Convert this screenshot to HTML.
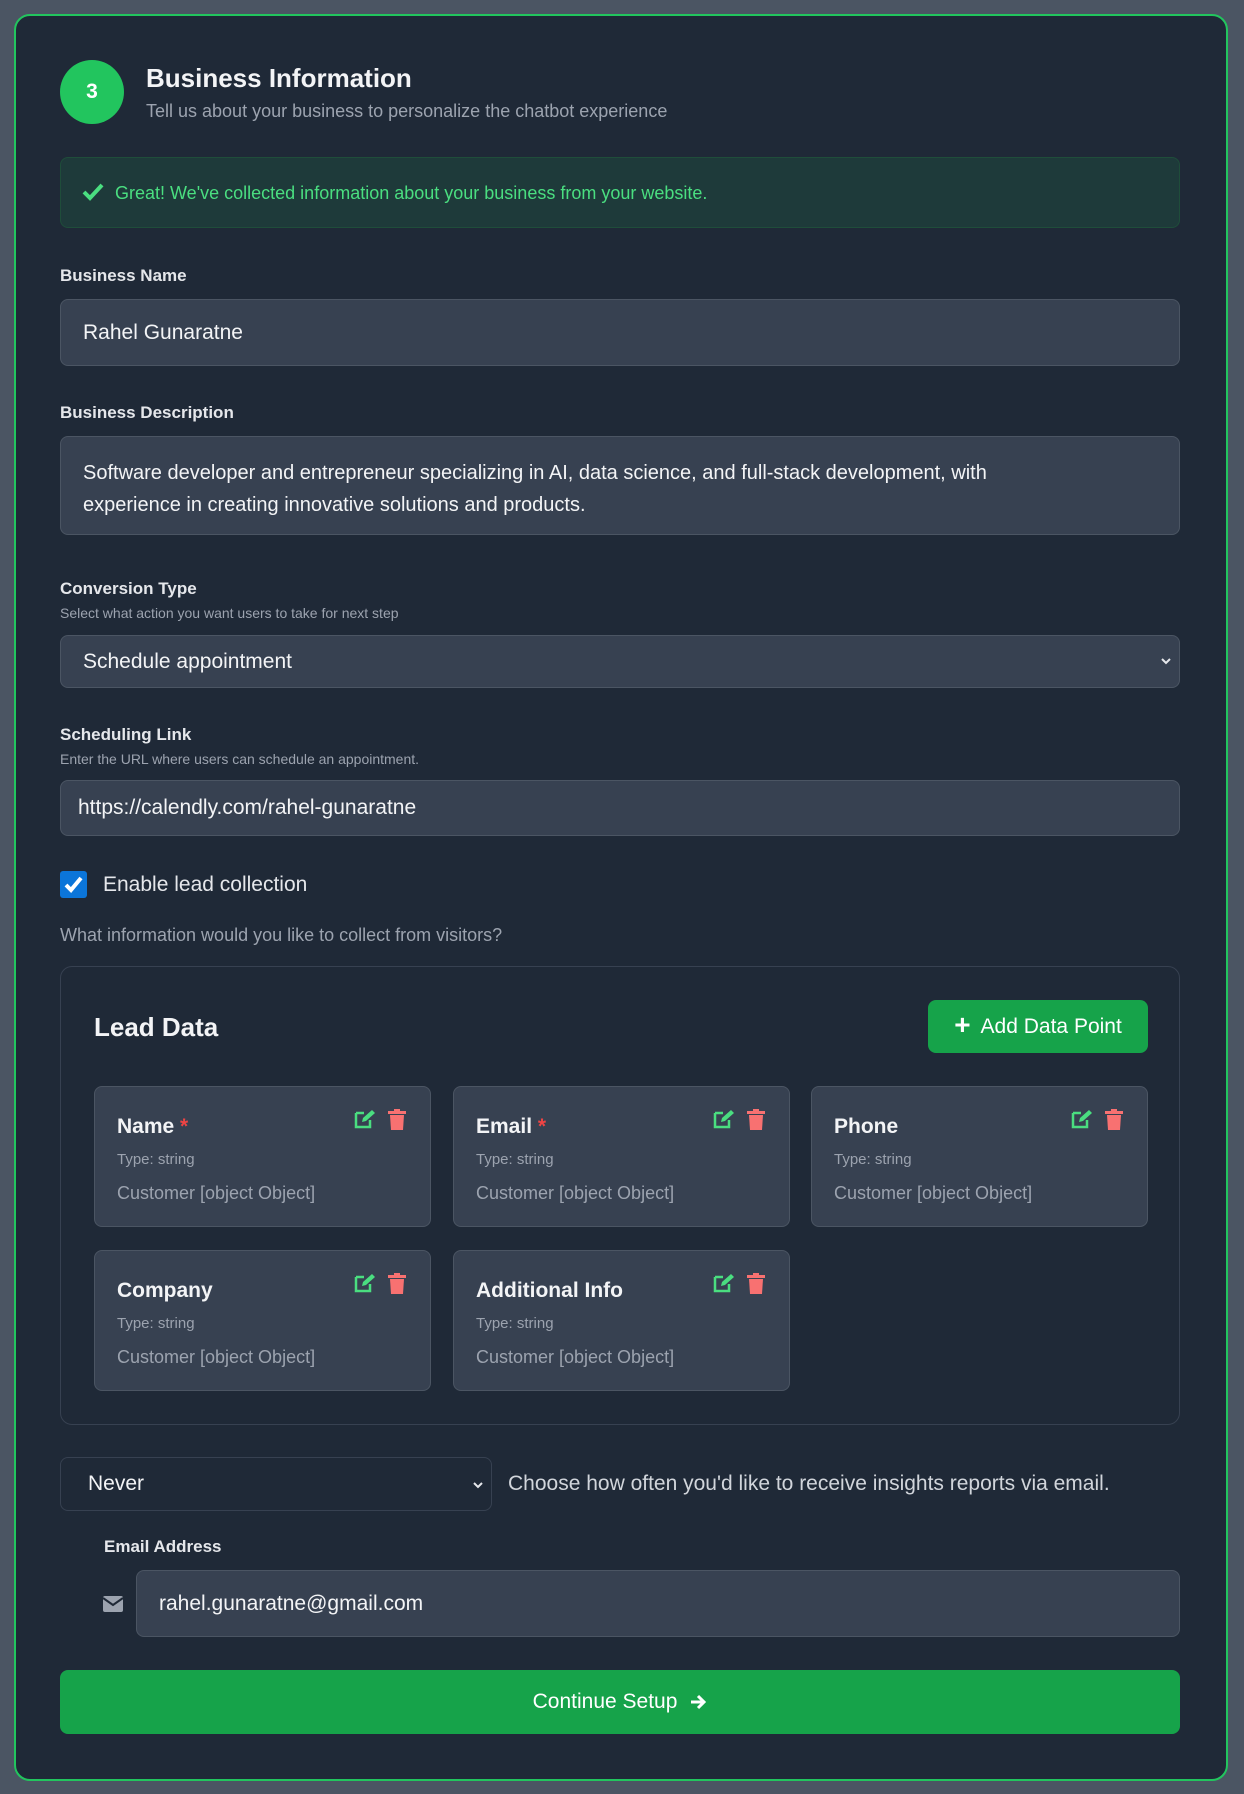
<!DOCTYPE html>
<html><head><meta charset="utf-8"><style>
*{box-sizing:border-box;margin:0;padding:0}
body{width:1244px;height:1794px;background:#4b5563;font-family:"Liberation Sans",sans-serif;position:relative;overflow:hidden;color:#f3f4f6}
.a{position:absolute}
.card{left:14px;top:14px;width:1214px;height:1767px;background:#1f2937;border:2px solid #22c55e;border-radius:16px}
.lbl{font-size:17px;font-weight:bold;color:#e5e7eb}
.sub{font-size:14px;color:#9ca3af}
.inp{background:#374151;border:1px solid #4b5563;border-radius:8px;color:#f3f4f6;font-size:21px;padding-left:22px;display:flex;align-items:center}
.lc{background:#374151;border:1px solid #4b5563;border-radius:8px;width:337px;height:141px}
.lc .t{position:absolute;left:22px;top:28px;font-size:21px;font-weight:bold;color:#f3f4f6}
.lc .t span{color:#ef4444}
.lc .ty{position:absolute;left:22px;top:64px;font-size:15px;color:#9ca3af}
.lc .d{position:absolute;left:22px;top:96px;font-size:18px;color:#9ca3af}
.lc svg{position:absolute;top:22px}
</style></head><body>
<div class="a card"></div>
<div class="a" style="left:60px;top:60px;width:64px;height:64px;border-radius:50%;background:#22c55e;color:#fff;font-weight:bold;font-size:21px;display:flex;align-items:center;justify-content:center">3</div>
<div class="a" style="left:146px;top:63px;font-size:26px;font-weight:bold;color:#f3f4f6">Business Information</div>
<div class="a" style="left:146px;top:101px;font-size:18px;color:#9ca3af">Tell us about your business to personalize the chatbot experience</div>
<div class="a" style="left:60px;top:157px;width:1120px;height:71px;background:#1e3a3a;border:1px solid #1f4d3a;border-radius:8px"></div>
<svg class="a" style="left:82px;top:183px" width="22" height="18" viewBox="0 0 22 18"><path d="M2 9l6 6L20 2" stroke="#4ade80" stroke-width="4" fill="none"/></svg>
<div class="a" style="left:115px;top:183px;font-size:18px;color:#4ade80">Great! We've collected information about your business from your website.</div>

<div class="a lbl" style="left:60px;top:266px">Business Name</div>
<div class="a inp" style="left:60px;top:299px;width:1120px;height:67px">Rahel Gunaratne</div>

<div class="a lbl" style="left:60px;top:403px">Business Description</div>
<div class="a inp" style="left:60px;top:436px;width:1120px;height:99px;align-items:flex-start;padding-top:20px;padding-right:130px;line-height:32px;font-size:20px">Software developer and entrepreneur specializing in AI, data science, and full-stack development, with experience in creating innovative solutions and products.</div>

<div class="a lbl" style="left:60px;top:579px">Conversion Type</div>
<div class="a sub" style="left:60px;top:605px">Select what action you want users to take for next step</div>
<div class="a inp" style="left:60px;top:635px;width:1120px;height:53px">Schedule appointment</div>
<svg class="a" style="left:1160px;top:656px" width="12" height="10" viewBox="0 0 12 10"><path d="M2 3l4 4 4-4" stroke="#e5e7eb" stroke-width="2" fill="none"/></svg>

<div class="a lbl" style="left:60px;top:725px">Scheduling Link</div>
<div class="a sub" style="left:60px;top:751px">Enter the URL where users can schedule an appointment.</div>
<div class="a inp" style="left:60px;top:780px;width:1120px;height:56px;padding-left:17px">https://calendly.com/rahel-gunaratne</div>

<div class="a" style="left:60px;top:871px;width:27px;height:27px;background:#0b75d9;border-radius:3px"></div>
<svg class="a" style="left:63px;top:875px" width="21" height="19" viewBox="0 0 21 19"><path d="M3 10l5 5L18 3" stroke="#fff" stroke-width="4" fill="none"/></svg>
<div class="a" style="left:103px;top:873px;font-size:21px;color:#e5e7eb">Enable lead collection</div>
<div class="a" style="left:60px;top:925px;font-size:18px;color:#9ca3af">What information would you like to collect from visitors?</div>

<div class="a" style="left:60px;top:966px;width:1120px;height:459px;border:1px solid #374151;border-radius:12px"></div>
<div class="a" style="left:94px;top:1012px;font-size:26px;font-weight:bold;color:#f3f4f6">Lead Data</div>
<div class="a" style="left:928px;top:1000px;width:220px;height:53px;background:#16a34a;border-radius:8px;color:#fff;font-size:21px;display:flex;align-items:center;justify-content:center"><span style="font-size:28px;font-weight:bold;margin-right:10px;margin-top:-4px">+</span>Add Data Point</div>

<div class="a lc" style="left:94px;top:1086px"><div class="t">Name <span>*</span></div><div class="ty">Type: string</div><div class="d">Customer [object Object]</div>
<svg style="left:259px" width="22" height="20" viewBox="0 0 22 20"><path d="M2 4h8M2 4v14h14v-7" stroke="#4ade80" stroke-width="2.5" fill="none"/><path d="M8 13l1-4 9-8 3 3-9 8z" fill="#4ade80"/></svg>
<svg style="left:292px" width="20" height="22" viewBox="0 0 20 22"><rect x="1" y="2" width="18" height="3" fill="#f87171"/><rect x="7" y="0" width="6" height="3" fill="#f87171"/><path d="M3 6h14l-1 15H4z" fill="#f87171"/></svg></div>
<div class="a lc" style="left:453px;top:1086px"><div class="t">Email <span>*</span></div><div class="ty">Type: string</div><div class="d">Customer [object Object]</div>
<svg style="left:259px" width="22" height="20" viewBox="0 0 22 20"><path d="M2 4h8M2 4v14h14v-7" stroke="#4ade80" stroke-width="2.5" fill="none"/><path d="M8 13l1-4 9-8 3 3-9 8z" fill="#4ade80"/></svg>
<svg style="left:292px" width="20" height="22" viewBox="0 0 20 22"><rect x="1" y="2" width="18" height="3" fill="#f87171"/><rect x="7" y="0" width="6" height="3" fill="#f87171"/><path d="M3 6h14l-1 15H4z" fill="#f87171"/></svg></div>
<div class="a lc" style="left:811px;top:1086px"><div class="t">Phone</div><div class="ty">Type: string</div><div class="d">Customer [object Object]</div>
<svg style="left:259px" width="22" height="20" viewBox="0 0 22 20"><path d="M2 4h8M2 4v14h14v-7" stroke="#4ade80" stroke-width="2.5" fill="none"/><path d="M8 13l1-4 9-8 3 3-9 8z" fill="#4ade80"/></svg>
<svg style="left:292px" width="20" height="22" viewBox="0 0 20 22"><rect x="1" y="2" width="18" height="3" fill="#f87171"/><rect x="7" y="0" width="6" height="3" fill="#f87171"/><path d="M3 6h14l-1 15H4z" fill="#f87171"/></svg></div>
<div class="a lc" style="left:94px;top:1250px"><div class="t">Company</div><div class="ty">Type: string</div><div class="d">Customer [object Object]</div>
<svg style="left:259px" width="22" height="20" viewBox="0 0 22 20"><path d="M2 4h8M2 4v14h14v-7" stroke="#4ade80" stroke-width="2.5" fill="none"/><path d="M8 13l1-4 9-8 3 3-9 8z" fill="#4ade80"/></svg>
<svg style="left:292px" width="20" height="22" viewBox="0 0 20 22"><rect x="1" y="2" width="18" height="3" fill="#f87171"/><rect x="7" y="0" width="6" height="3" fill="#f87171"/><path d="M3 6h14l-1 15H4z" fill="#f87171"/></svg></div>
<div class="a lc" style="left:453px;top:1250px"><div class="t">Additional Info</div><div class="ty">Type: string</div><div class="d">Customer [object Object]</div>
<svg style="left:259px" width="22" height="20" viewBox="0 0 22 20"><path d="M2 4h8M2 4v14h14v-7" stroke="#4ade80" stroke-width="2.5" fill="none"/><path d="M8 13l1-4 9-8 3 3-9 8z" fill="#4ade80"/></svg>
<svg style="left:292px" width="20" height="22" viewBox="0 0 20 22"><rect x="1" y="2" width="18" height="3" fill="#f87171"/><rect x="7" y="0" width="6" height="3" fill="#f87171"/><path d="M3 6h14l-1 15H4z" fill="#f87171"/></svg></div>

<div class="a inp" style="left:60px;top:1457px;width:432px;height:54px;background:#1f2937;border-color:#374151;padding-left:27px">Never</div>
<svg class="a" style="left:472px;top:1480px" width="12" height="10" viewBox="0 0 12 10"><path d="M2 3l4 4 4-4" stroke="#e5e7eb" stroke-width="2" fill="none"/></svg>
<div class="a" style="left:508px;top:1472px;font-size:21px;color:#d1d5db">Choose how often you'd like to receive insights reports via email.</div>

<div class="a lbl" style="left:104px;top:1537px">Email Address</div>
<svg class="a" style="left:103px;top:1596px" width="20" height="16" viewBox="0 0 20 16"><rect x="0" y="0" width="20" height="16" rx="2" fill="#9ca3af"/><path d="M0 2l10 7 10-7" stroke="#1f2937" stroke-width="2" fill="none"/></svg>
<div class="a inp" style="left:136px;top:1570px;width:1044px;height:67px">rahel.gunaratne@gmail.com</div>

<div class="a" style="left:60px;top:1670px;width:1120px;height:64px;background:#16a34a;border-radius:8px;color:#fff;font-size:21px;display:flex;align-items:center;justify-content:center">Continue Setup <svg style="margin-left:12px" width="18" height="18" viewBox="0 0 18 18"><path d="M2 9h13M9 3l6 6-6 6" stroke="#fff" stroke-width="3" fill="none"/></svg></div>
</body></html>
